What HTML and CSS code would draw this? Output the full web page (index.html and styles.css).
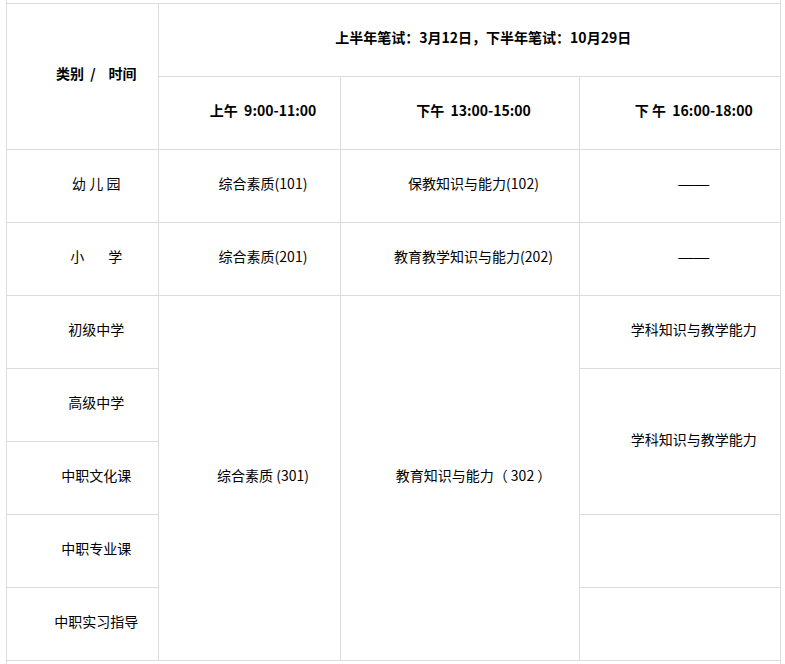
FILE: index.html
```html
<!DOCTYPE html>
<html lang="zh-CN">
<head>
<meta charset="utf-8">
<title>考试时间</title>
<link rel="stylesheet" href="styles.css">
</head>
<body>
<div class="wrap">
<table class="sched">
  <colgroup>
    <col class="c1"><col class="c2"><col class="c3"><col class="c4">
  </colgroup>
  <tr>
    <td class="b l hd" rowspan="2">类别&nbsp;&nbsp;/&nbsp;&nbsp;&nbsp;&nbsp;时间</td>
    <td class="b r" colspan="3">上半年笔试：3月12日，下半年笔试：10月29日</td>
  </tr>
  <tr>
    <td class="b">上午&nbsp;&nbsp;9:00-11:00</td>
    <td class="b">下午&nbsp;&nbsp;13:00-15:00</td>
    <td class="b r">下&nbsp;午&nbsp;&nbsp;16:00-18:00</td>
  </tr>
  <tr>
    <td class="l">幼&nbsp;儿&nbsp;园</td>
    <td>综合素质(101)</td>
    <td>保教知识与能力(102)</td>
    <td class="r"><span class="dash">——</span></td>
  </tr>
  <tr>
    <td class="l"><span class="xx">小</span><span>学</span></td>
    <td>综合素质(201)</td>
    <td>教育教学知识与能力(202)</td>
    <td class="r"><span class="dash">——</span></td>
  </tr>
  <tr>
    <td class="l">初级中学</td>
    <td rowspan="5">综合素质 (301)</td>
    <td rowspan="5">教育知识与能力（ 302 ）</td>
    <td class="r">学科知识与教学能力</td>
  </tr>
  <tr>
    <td class="l">高级中学</td>
    <td class="r" rowspan="2">学科知识与教学能力</td>
  </tr>
  <tr>
    <td class="l">中职文化课</td>
  </tr>
  <tr>
    <td class="l">中职专业课</td>
    <td class="r"></td>
  </tr>
  <tr>
    <td class="l">中职实习指导</td>
    <td class="r"></td>
  </tr>
</table>
</div>
</body>
</html>
```
FILE: styles.css
```css
html, body {
  margin: 0;
  padding: 0;
  background: #fff;
}
body {
  font-family: "Noto Sans CJK SC", "Liberation Sans", sans-serif;
  font-size: 14px;
  color: #000;
}
.wrap {
  box-sizing: border-box;
  margin-left: 6px;
  width: 775px;
  min-height: 664px;
  padding-top: 3px;
  border-left: 1px solid #dcdcdc;
  border-right: 1px solid #dcdcdc;
}
.sched {
  width: 773px;
  border-collapse: collapse;
  table-layout: fixed;
}
.c1 { width: 151px; }
.c2 { width: 182px; }
.c3 { width: 239px; }
.c4 { width: 201px; }
.sched tr {
  height: 73px;
}
.sched td {
  border: 1px solid #dcdcdc;
  padding: 0 0 6px 0;
  text-align: center;
  vertical-align: middle;
  text-indent: 2em;
  line-height: 20px;
  white-space: nowrap;
}
.sched td.hd { padding-bottom: 8px; }
.sched td.l { border-left: 0; }
.sched td.r { border-right: 0; }
.sched td.b { font-weight: bold; }
.xx { margin-right: 24px; }
.dash {
  font-family: "Liberation Sans", sans-serif;
  font-size: 15.5px;
}
```
